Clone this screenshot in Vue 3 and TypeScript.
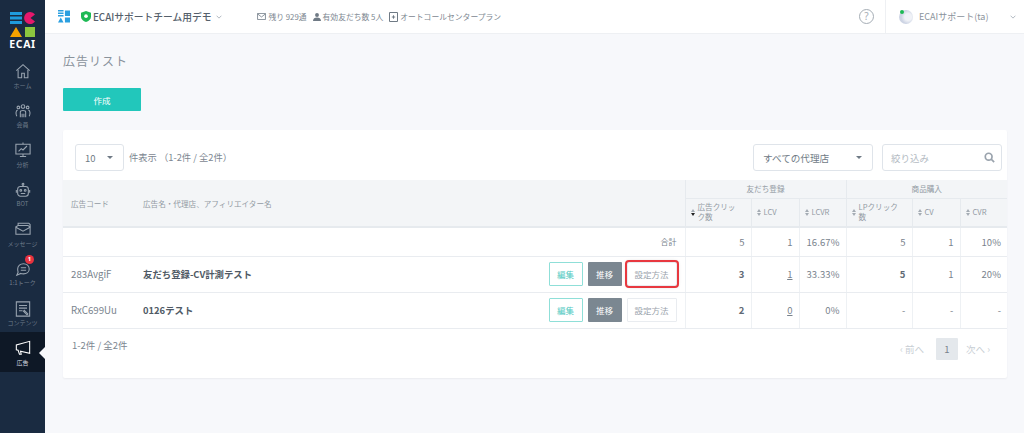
<script setup lang="ts">
interface NavItem { label: string; icon: string; badge?: string; active?: boolean }
const nav: NavItem[] = [
  { label: 'ホーム', icon: 'home' },
  { label: '会員', icon: 'people' },
  { label: '分析', icon: 'chart' },
  { label: 'BOT', icon: 'bot' },
  { label: 'メッセージ', icon: 'mail' },
  { label: '1:1トーク', icon: 'talk', badge: '1' },
  { label: 'コンテンツ', icon: 'doc' },
  { label: '広告', icon: 'mega', active: true }
]
const sub = [
  { label: '広告クリック数', active: true },
  { label: 'LCV' },
  { label: 'LCVR' },
  { label: 'LPクリック数' },
  { label: 'CV' },
  { label: 'CVR' }
]
</script>

<template>
  <div class="page">
    <aside class="side">
      <div class="logo">
        <svg width="26" height="26" viewBox="0 0 26 26">
          <path d="M0 0h12v3H0zM0 4.500h12v3H0zM0 9h12v3H0z" fill="#1f9bdc" />
          <path d="M20 0a6 6 0 1 0 5 9.500L20.500 6 25 2.500A6 6 0 0 0 20 0z" fill="#e6186c" />
          <path d="M6 15 12 25H0z" fill="#f5a200" />
          <path d="M15 15h10v10H15z" fill="#8cc63f" />
        </svg>
        <span class="logo-text">ECAI</span>
      </div>
      <div v-for="n in nav" :key="n.label" class="nav" :class="{ active: n.active }">
        <svg class="nav-ic" width="16" height="16" viewBox="0 0 18 18" fill="none" stroke="#99a4b0" stroke-width="1.200">
          <template v-if="n.icon === 'home'">
            <path d="M1.500 8.500 9 1.800l7.500 6.700" /><path d="M3.500 7.500v9h4v-5h3v5h4v-9" />
          </template>
          <template v-else-if="n.icon === 'people'">
            <circle cx="9" cy="4" r="2" /><circle cx="3.800" cy="5" r="1.500" /><circle cx="14.200" cy="5" r="1.500" />
            <path d="M6 16v-6c0-2 6-2 6 0v6M2 15c-1.500-3-1-7 1-7M16 15c1.500-3 1-7-1-7M8 16V12M10 16V12" />
          </template>
          <template v-else-if="n.icon === 'chart'">
            <path d="M1 2.500h16v11H1zM9 .500v2M9 13.500v2.500M5.500 16.300h7" /><path d="M4 10.500l3-3 2 1.500 4.500-4.500" />
          </template>
          <template v-else-if="n.icon === 'bot'">
            <rect x="3" y="5" width="12" height="11" rx="3" /><circle cx="9" cy="2.500" r="1" /><path d="M9 3.500V5M1.500 9v3M16.500 9v3M6.500 13h5" />
            <circle cx="6.500" cy="9.500" r="1" /><circle cx="11.500" cy="9.500" r="1" />
          </template>
          <template v-else-if="n.icon === 'mail'">
            <path d="M1 6.500 3.500 5h11L17 6.500V15H1z" /><path d="M1 7l8 4.500L17 7M3.500 5V2.500h12L17 4v2.500" />
          </template>
          <template v-else-if="n.icon === 'talk'">
            <path d="M3 9c0-3.500 3-6 6.500-6S16 5.500 16 9s-3 5.500-6.500 5.500c-1 0-2-.1-3-.5L2 16l1.500-3.500C3.200 11.500 3 10 3 9z" /><path d="M6.500 7.500h6M6.500 10.500h6" />
          </template>
          <template v-else-if="n.icon === 'doc'">
            <path d="M1.500 1h15v16h-15z" /><path d="M4.500 5h9M4.500 8h9M4.500 11h4M10.500 10.500l4 4-1 1-4-4z" />
          </template>
          <template v-else>
            <path d="M1.500 5.500v5.500l2 .5 1.500 4.500H7L6.200 12.500 16.500 15V1.500L1.500 5.500z" stroke="#fff" />
          </template>
        </svg>
        <span v-if="n.badge" class="nav-badge">{{ n.badge }}</span>
        <span class="nav-label">{{ n.label }}</span>
      </div>
    </aside>

    <div class="body">
      <header class="top">
        <svg class="top-logo" width="12" height="13" viewBox="0 0 13 14">
          <path d="M0 0h6v1.600H0zM0 2.700h6v1.600H0zM0 5.400h6v1.600H0zM7.500 .5H13v6H7.500zM0 13.500 3 8l3 5.500zM7.500 8H13v5.500H7.500z" fill="#2a9fe0" />
        </svg>
        <svg class="shield" width="10" height="11" viewBox="0 0 11 12">
          <path d="M5.500 0 11 1.800v4.400c0 3-2.500 4.900-5.500 5.800C2.500 11.100 0 9.200 0 6.200V1.800z" fill="#1db954" />
          <circle cx="5.500" cy="5.600" r="2" fill="#fff" />
        </svg>
        <span class="org">ECAIサポートチーム用デモ</span>
        <svg class="chev" width="6" height="4" viewBox="0 0 8 5" fill="none" stroke="#9aa3ad"><path d="M.8.800 4 4 7.200.800" /></svg>
        <div class="stats">
          <span class="stat">
            <svg width="9" height="7" viewBox="0 0 10 8" fill="none" stroke="#7a858f"><path d="M.5.500h9v7h-9zM.5 1l4.500 3.500L9.500 1" /></svg>
            残り 929通
          </span>
          <span class="stat">
            <svg width="8" height="8" viewBox="0 0 9 9" fill="#6f7a85"><circle cx="4.500" cy="2.200" r="2.200" /><path d="M0 9c0-3 2-4 4.500-4S9 6 9 9z" /></svg>
            有効友だち数 5人
          </span>
          <span class="stat">
            <svg width="9" height="10" viewBox="0 0 9 10" fill="none" stroke="#6f7a85"><path d="M.5.500h8v9h-8zM2.800 5h3.400M4.500 3.300v3.400" /></svg>
            オートコールセンタープラン
          </span>
        </div>
        <div class="help"><span class="help-ic">?</span></div>
        <div class="user">
          <span class="avatar"><i class="dot"></i></span>
          <span class="uname">ECAIサポート(ta)</span>
          <svg width="6" height="4" viewBox="0 0 8 5" fill="none" stroke="#9aa3ad"><path d="M.8.800 4 4 7.200.800" /></svg>
        </div>
      </header>

      <main class="main">
        <h1 class="title">広告リスト</h1>
        <button class="create">作成</button>

        <section class="card">
          <div class="tools">
            <div class="select small"><span>10</span><i class="caret"></i></div>
            <span class="count">件表示 （1-2件 / 全2件）</span>
            <div class="select agency"><span>すべての代理店</span><i class="caret"></i></div>
            <div class="search">
              <span>絞り込み</span>
              <svg width="11" height="11" viewBox="0 0 13 13" fill="none" stroke="#9aa3ad" stroke-width="2"><circle cx="5.500" cy="5.500" r="4" /><path d="m8.500 8.500 3.500 3.500" /></svg>
            </div>
          </div>

          <table class="tbl">
            <colgroup>
              <col class="c1" /><col class="c2" /><col class="c3" /><col class="c4" />
              <col class="c5" /><col class="c6" /><col class="c7" /><col class="c8" />
            </colgroup>
            <thead>
              <tr class="h1">
                <th rowspan="2" class="lead">広告コード</th>
                <th rowspan="2" class="name-h">広告名・代理店、アフィリエイター名</th>
                <th colspan="3" class="grp">友だち登録</th>
                <th colspan="3" class="grp">商品購入</th>
              </tr>
              <tr class="h2">
                <th v-for="s in sub" :key="s.label" class="sub">
                  <span class="sub-in">
                    <span class="sort" :class="{ on: s.active }"><i class="up"></i><i class="down"></i></span>
                    <span>{{ s.label }}</span>
                  </span>
                </th>
              </tr>
            </thead>
            <tbody>
              <tr class="r-total">
                <td colspan="2" class="sum">合計</td>
                <td class="num">5</td><td class="num">1</td><td class="num">16.67%</td>
                <td class="num">5</td><td class="num">1</td><td class="num">10%</td>
              </tr>
              <tr class="r">
                <td class="lead code">283AvgiF</td>
                <td class="name">
                  <div class="name-in">
                    <b>友だち登録-CV計測テスト</b>
                    <div class="btns">
                      <button class="b edit">編集</button>
                      <button class="b move">推移</button>
                      <button class="b how hl">設定方法</button>
                    </div>
                  </div>
                </td>
                <td class="num strong">3</td><td class="num"><u>1</u></td><td class="num">33.33%</td>
                <td class="num strong">5</td><td class="num">1</td><td class="num">20%</td>
              </tr>
              <tr class="r">
                <td class="lead code">RxC699Uu</td>
                <td class="name">
                  <div class="name-in">
                    <b>0126テスト</b>
                    <div class="btns">
                      <button class="b edit">編集</button>
                      <button class="b move">推移</button>
                      <button class="b how">設定方法</button>
                    </div>
                  </div>
                </td>
                <td class="num strong">2</td><td class="num"><u>0</u></td><td class="num">0%</td>
                <td class="num">-</td><td class="num">-</td><td class="num">-</td>
              </tr>
            </tbody>
          </table>

          <div class="foot">
            <span class="foot-count">1-2件 / 全2件</span>
            <div class="pager">
              <span class="pg">‹ 前へ</span>
              <span class="cur">1</span>
              <span class="pg">次へ ›</span>
            </div>
          </div>
        </section>
      </main>
    </div>
  </div>
</template>

<style>
html, body { margin: 0; background: #f7f8fb; }
</style>

<style scoped>
* { box-sizing: border-box; }
.page {
  display: flex;
  width: 1024px;
  height: 433px;
  overflow: hidden;
  font-family: "Noto Sans CJK JP", "Noto Sans", sans-serif;
  color: #6f7a85;
}
.side { width: 45px; flex: none; background: #1a2b41; }
.logo { height: 53px; display: flex; flex-direction: column; align-items: center; padding-top: 12px; }
.logo svg { flex: none; }
.logo-text { color: #fff; font: 700 10.500px/10px "Noto Sans", sans-serif; letter-spacing: .6px; margin-top: 1px; }
.nav { position: relative; height: 39.600px; display: flex; flex-direction: column; align-items: center; padding-top: 10px; }
.nav.active::before {
  content: "";
  position: absolute;
  left: 0;
  right: 0;
  top: 2px;
  height: 40px;
  background: #0e1826;
}
.nav.active::after {
  content: "";
  position: absolute;
  right: 0;
  top: 16.500px;
  border: 6px solid transparent;
  border-right-color: #f7f8fb;
  border-left-width: 0;
}
.nav-ic { flex: none; position: relative; }
.nav-label { position: relative; font-size: 6px; line-height: 9px; color: #6f7c8b; margin-top: 1.500px; white-space: nowrap; }
.nav.active .nav-label { color: #d5dae0; }
.nav-badge {
  position: absolute;
  left: 25px;
  top: 4.500px;
  width: 9px;
  height: 9px;
  border-radius: 50%;
  background: #e8323f;
  color: #fff;
  font: 700 6px/9px "Noto Sans", sans-serif;
  text-align: center;
}
.body { flex: 1; min-width: 0; display: flex; flex-direction: column; }
.top {
  height: 34px;
  flex: none;
  background: #fff;
  border-bottom: 1px solid #eef0f3;
  display: flex;
  align-items: center;
  padding-left: 13px;
}
.top-logo { margin-right: 11px; }
.shield { margin-right: 2px; }
.org { font-size: 9.750px; font-weight: 500; color: #55606b; white-space: nowrap; }
.chev { margin-left: 5px; }
.stats { display: flex; gap: 6px; margin-left: 35px; font-size: 7.800px; color: #7d8791; }
.stat { display: flex; align-items: center; gap: 2px; white-space: nowrap; }
.help { margin-left: auto; width: 26px; height: 33px; display: flex; align-items: center; justify-content: flex-start; }
.help-ic {
  width: 15px;
  height: 15px;
  border: 1.200px solid #a5adb5;
  border-radius: 50%;
  font: 10px/13px "Noto Sans", sans-serif;
  text-align: center;
  color: #a5adb5;
}
.user {
  width: 139px;
  height: 33px;
  border-left: 1px solid #eef0f3;
  display: flex;
  align-items: center;
  padding-left: 13px;
  font-size: 9px;
  color: #8a939c;
}
.avatar {
  position: relative;
  width: 14px;
  height: 14px;
  border-radius: 50%;
  background: radial-gradient(circle at 65% 50%, #f0f2f7 0 30%, #cdd4e4 60%);
  flex: none;
}
.dot { position: absolute; left: 1px; top: 0; width: 4px; height: 4px; border-radius: 50%; background: #1db954; }
.uname { margin-left: 6px; width: 91px; white-space: nowrap; }
.main { flex: 1; padding: 0 17px 0 18px; background: #f7f8fb; }
.title { margin: 18px 0 0; font-size: 12px; line-height: 18px; font-weight: 400; color: #8a939c; letter-spacing: 1px; }
.create {
  display: block;
  margin-top: 18px;
  width: 78px;
  height: 23px;
  border: 0;
  border-radius: 1px;
  background: #22c7bb;
  color: #fff;
  font: 8.500px "Noto Sans CJK JP", sans-serif;
  padding: 0;
}
.card {
  margin-top: 19px;
  width: 944px;
  height: 248px;
  background: #fff;
  border-radius: 2px;
  box-shadow: 0 1px 2px rgba(30, 40, 60, .06);
}
.tools { height: 50px; display: flex; align-items: flex-start; padding: 14px 5px 0 12px; }
.select {
  height: 27px;
  border: 1px solid #dfe4ea;
  border-radius: 3px;
  display: flex;
  align-items: center;
  justify-content: space-between;
  background: #fff;
}
.select.small { width: 49px; padding: 0 10px 0 9px; font-size: 9.500px; }
.select.agency { width: 120px; margin-left: auto; padding: 0 10px 0 9px; font-size: 9.600px; color: #6f7a85; }
.caret { width: 0; height: 0; border: 3px solid transparent; border-top-color: #6f7a85; border-bottom-width: 0; }
.count { margin-left: 5px; font-size: 9.300px; line-height: 27px; color: #7d8791; }
.search {
  width: 120px;
  height: 27px;
  margin-left: 9px;
  border: 1px solid #dfe4ea;
  border-radius: 3px;
  display: flex;
  align-items: center;
  justify-content: space-between;
  padding: 0 6px 0 8px;
  font-size: 9.500px;
  color: #b4bbc3;
}
.tbl { width: 944px; table-layout: fixed; border-collapse: collapse; }
.c1 { width: 80px; }
.c2 { width: 542px; }
.c3 { width: 66px; }
.c4 { width: 48px; }
.c5 { width: 47px; }
.c6 { width: 66px; }
.c7 { width: 48px; }
.c8 { width: 47px; }
th {
  background: #f3f5f7;
  font-weight: 400;
  font-size: 7.600px;
  color: #929aa3;
  text-align: left;
  padding: 0;
}
.h1 { height: 18px; }
.h2 { height: 29px; }
thead { border-bottom: 2px solid #e6eaee; }
.lead { padding-left: 8px; }
.grp { text-align: center; border-left: 1px solid #e6eaee; border-bottom: 1px solid #e6eaee; }
.sub { border-left: 1px solid #e6eaee; padding: 0 12px 0 5px; line-height: 10px; }
.sub-in { display: flex; align-items: center; gap: 3px; }
.sort { display: flex; flex-direction: column; gap: 1px; flex: none; }
.sort i { display: block; width: 0; height: 0; border: 2.200px solid transparent; }
.up { border-bottom: 3px solid #a4acb4 !important; border-top-width: 0 !important; }
.down { border-top: 3px solid #a4acb4 !important; border-bottom-width: 0 !important; }
.sort.on .down { border-top-color: #222 !important; }
td { padding: 0; font-size: 9.500px; color: #79838d; border-bottom: 1px solid #e9ecf0; }
.r-total { height: 29px; }
.r { height: 36px; }
.sum { text-align: right; padding-right: 8px; font-size: 8px; }
.num { border-left: 1px solid #eef1f4; text-align: right; padding-right: 6px; letter-spacing: .1px; }
.strong { font-weight: 700; color: #5f6a75; }
.code { font-size: 9.700px; }
.name { padding-right: 8px; }
.name-in { display: flex; align-items: center; justify-content: space-between; }
.name-in b { font-size: 9.400px; color: #4f5a65; font-weight: 700; }
.btns { display: flex; gap: 5px; }
.b { height: 24px; border-radius: 1px; font: 8.500px "Noto Sans CJK JP", sans-serif; padding: 0; }
.edit { width: 34px; background: #fff; border: 1px solid #8fdfd8; color: #4ec9bf; }
.move { width: 34px; background: #7b8791; border: 0; color: #fff; }
.how { width: 50px; background: #fff; border: 1px solid #e9ecf0; color: #9aa3ac; }
.hl { outline: 2px solid #e8383f; outline-offset: 0; border-radius: 2px; box-shadow: 0 0 4px rgba(0, 0, 0, .25); }
.foot { display: flex; justify-content: space-between; padding: 9px 17px 0 9px; }
.foot-count { font-size: 9.500px; color: #7d8791; line-height: 14px; }
.pager { display: flex; align-items: center; font-size: 9.500px; color: #c8ced4; }
.cur {
  width: 22px;
  height: 22px;
  margin: 0 8px 0 12px;
  background: #e4e8ec;
  border-radius: 1px;
  text-align: center;
  line-height: 22px;
  color: #77818b;
}
.pg { white-space: nowrap; }
</style>
